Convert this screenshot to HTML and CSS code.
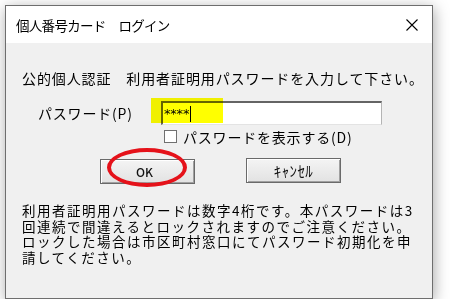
FILE: index.html
```html
<!DOCTYPE html>
<html lang="ja">
<head>
    <meta charset="UTF-8">
    <title>個人番号カード ログイン</title>
    <link rel="stylesheet" href="styles.css">
</head>
<body>
    <div class="window">
        <div class="titlebar">
            <span class="title">個人番号カード　ログイン</span>
            <svg class="close" width="12" height="12" viewBox="0 0 12 12">
                <path d="M0.5 0.5 L11.5 11.5 M11.5 0.5 L0.5 11.5" stroke="#000" stroke-width="1.1" fill="none"/>
            </svg>
        </div>
        <div class="content">
            <p class="lead">公的個人認証　利用者証明用パスワードを入力して下さい。</p>
            <div class="pw-row">
                <label class="pw-label">パスワード(P)</label>
                <div class="field">
                    <span class="marker"></span>
                    <div class="input">****<span class="caret"></span></div>
                </div>
            </div>
            <div class="check-row">
                <span class="checkbox"></span>
                <span>パスワードを表示する(D)</span>
            </div>
            <div class="buttons">
                <div class="btn-wrap">
                    <button class="btn btn-ok">OK</button>
                    <span class="ring"></span>
                </div>
                <button class="btn btn-cancel">ｷｬﾝｾﾙ</button>
            </div>
            <p class="notice">利用者証明用パスワードは数字4桁です。本パスワードは3<br>回連続で間違えるとロックされますのでご注意ください。<br>ロックした場合は市区町村窓口にてパスワード初期化を申<br>請してください。</p>
        </div>
    </div>
</body>
</html>
```

FILE: styles.css
```css
body {
    margin: 0;
    padding: 5px 0 0 5px;
    background-color: #fff;
    font-family: "Noto Sans CJK JP", "Noto Sans", sans-serif;
    color: #000;
}
.window {
    width: 428px;
    height: 294px;
    box-sizing: border-box;
    border: 1px solid #6e6e6e;
    background-color: #f0f0f0;
    box-shadow: 1px 3px 14px rgba(0, 0, 0, 0.35);
    display: flex;
    flex-direction: column;
}
.titlebar {
    height: 37px;
    background-color: #fff;
    display: flex;
    align-items: center;
    justify-content: space-between;
    padding: 0 14px 0 10px;
}
.title {
    font-size: 13.5px;
    letter-spacing: -0.7px;
}
.content {
    padding-left: 16px;
}
.lead {
    margin: 26px 0 0;
    font-size: 14px;
    line-height: 18px;
    letter-spacing: 0.9px;
    white-space: nowrap;
}
.pw-row {
    display: flex;
    align-items: center;
    margin-top: 14px;
    padding-left: 16px;
}
.pw-label {
    width: 123px;
    font-size: 14px;
    letter-spacing: 0.8px;
}
.field {
    position: relative;
}
.marker {
    position: absolute;
    left: -10px;
    top: -3px;
    width: 72px;
    height: 25px;
    background-color: #ffff00;
    mix-blend-mode: multiply;
    z-index: 1;
}
.input {
    width: 221px;
    height: 24px;
    box-sizing: border-box;
    background-color: #fff;
    border-top: 2px solid #646464;
    border-left: 2px solid #646464;
    border-right: 1px solid #b4b4b4;
    border-bottom: 1px solid #e3e3e3;
    padding-left: 1px;
    font-family: "DejaVu Sans", sans-serif;
    font-size: 13px;
    line-height: 20px;
    letter-spacing: -0.2px;
    display: flex;
    align-items: center;
}
.caret {
    width: 1px;
    height: 16px;
    margin-left: 1px;
    background-color: #000;
}
.check-row {
    display: flex;
    align-items: center;
    gap: 6px;
    margin-top: 4px;
    padding-left: 142px;
    height: 15px;
    font-size: 14px;
    letter-spacing: 0.8px;
}
.checkbox {
    width: 13px;
    height: 13px;
    box-sizing: border-box;
    background-color: #fff;
    border: 1px solid #707070;
}
.buttons {
    display: flex;
    gap: 51px;
    margin-top: 14px;
    padding-left: 78px;
}
.btn-wrap {
    position: relative;
}
.btn {
    width: 95px;
    height: 25px;
    box-sizing: border-box;
    border: 1px solid #6a6a6a;
    background: linear-gradient(#f4f4f4, #e2e2e2);
    box-shadow: inset 1px 1px 0 #fff, inset -1px -1px 0 #a0a0a0;
    font-family: "Noto Sans CJK JP", sans-serif;
    padding: 0;
    color: #111;
}
.btn-ok {
    font-size: 12px;
    font-weight: 500;
    padding-right: 6px;
}
.btn-cancel {
    font-size: 15px;
    letter-spacing: 0.4px;
}
.ring {
    position: absolute;
    left: 7px;
    top: -10px;
    width: 80px;
    height: 39px;
    box-sizing: border-box;
    border: 4px solid #e5121a;
    border-radius: 50%;
}
.notice {
    margin: 19px 0 0;
    font-size: 13.5px;
    line-height: 15.5px;
    letter-spacing: 1.5px;
    white-space: nowrap;
}
```
